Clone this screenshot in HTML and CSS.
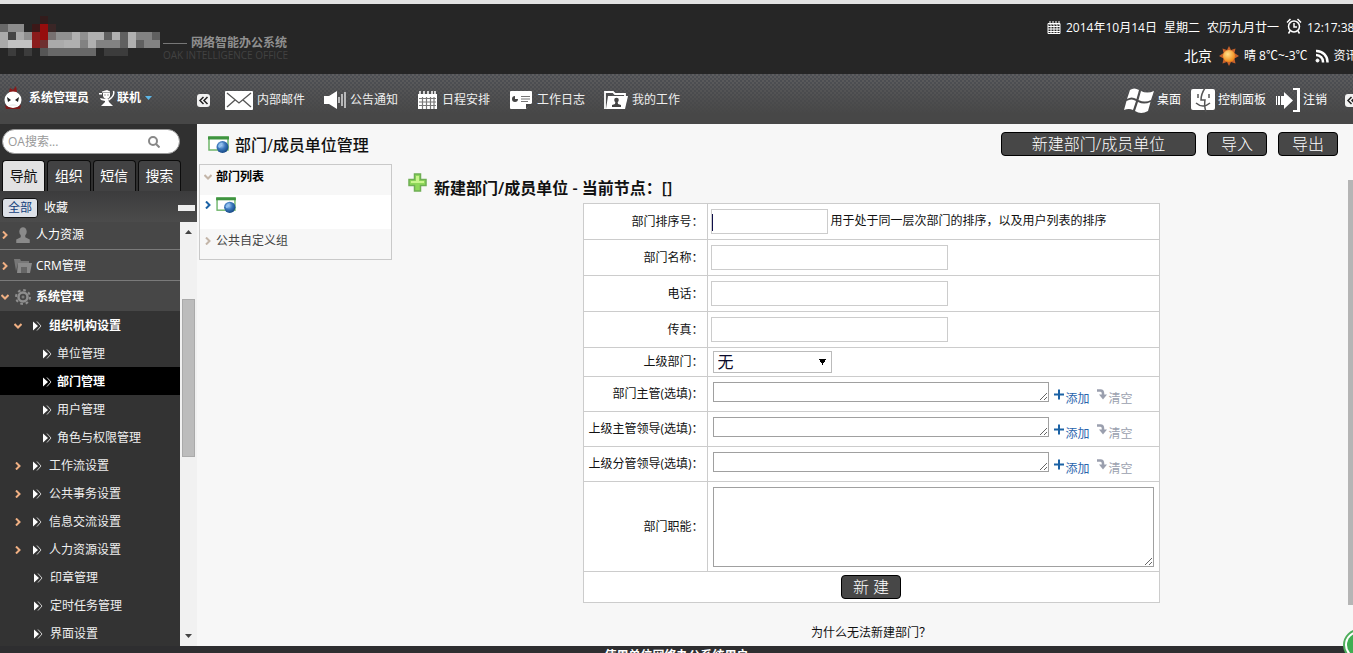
FILE: index.html
```html
<!DOCTYPE html>
<html lang="zh-CN">
<head>
<meta charset="utf-8">
<title>网络智能办公系统</title>
<link rel="stylesheet" href="styles.css">
</head>
<body>
<svg class="defs" aria-hidden="true">
  <defs>
    <radialGradient id="globe" cx="40%" cy="35%" r="65%"><stop offset="0" stop-color="#a8cdf5"/><stop offset=".5" stop-color="#3c78bd"/><stop offset="1" stop-color="#174a86"/></radialGradient>
    <radialGradient id="sunfill" cx="40%" cy="35%" r="65%"><stop offset="0" stop-color="#ffe08a"/><stop offset="1" stop-color="#f08a18"/></radialGradient>
    <symbol id="site" viewBox="0 0 21 17"><rect x="1" y="1" width="19" height="13" fill="#fff" stroke="#6fb56a" stroke-width="1.500"/><path d="M0 2h21" stroke="#3f9440" stroke-width="3"/><circle cx="14.500" cy="11" r="6" fill="url(#globe)"/><path d="M10 10q2-4 5-3l-2 2 0 2-2 1z" fill="#8fc0ee"/></symbol>
    <symbol id="chev" viewBox="0 0 8 8"><path d="M2 0.500L5.500 4 2 7.500" fill="none" stroke="currentColor" stroke-width="2"/></symbol>
    <symbol id="chevd" viewBox="0 0 8 8"><path d="M0.500 2L4 5.500 7.500 2" fill="none" stroke="currentColor" stroke-width="2"/></symbol>
    <symbol id="mark" viewBox="0 0 9 10"><path d="M0 0.500L5 5 0 9.500z" fill="#fff"/><path d="M4 0.500L8 5 4 9.500" fill="none" stroke="#ccc"/></symbol>
    <symbol id="plus" viewBox="0 0 10 10"><path d="M5 0v10M0 5h10" stroke="#1b62a5" stroke-width="2"/></symbol>
    <symbol id="clear" viewBox="0 0 10 11"><path d="M0 1.500h3.500q2.500 0 2.500 3V6" fill="none" stroke="#9a9fae" stroke-width="2.500"/><path d="M2 5.500h8L6 10.500z" fill="#9a9fae"/></symbol>
    <symbol id="back" viewBox="0 0 13 13"><rect width="13" height="13" rx="3" fill="#f2f2f2"/><path d="M6.500 3L3 6.500 6.500 10M10.500 3L7 6.500 10.500 10" fill="none" stroke="#222" stroke-width="1.500"/></symbol>
  </defs>
</svg>

<header class="banner">
  <div class="brand">
    <svg class="mosaic" viewBox="0 0 20 5" preserveAspectRatio="none" shape-rendering="crispEdges" aria-hidden="true">
      <path d="M0 1h1v1H0zM6 4h6v1H6z" fill="#686868"/>
      <path d="M1 1h2v1H1z" fill="#8c8c8c"/>
      <path d="M5 0h1v1H5z" fill="#321c1c"/>
      <path d="M4 1h1v1H4z" fill="#3c1818"/>
      <path d="M5 1h1v2H5z" fill="#960d0d"/>
      <path d="M5 3h1v1H5z" fill="#6e3030"/>
      <path d="M4 2h1v2H4z" fill="#8a1c1c"/>
      <path d="M5 4h1v1H5z" fill="#555"/>
      <path d="M6 1h1v1H6z" fill="#3a2626"/>
      <path d="M6 2h1v1H6z" fill="#777070"/>
      <path d="M0 2h1v2H0zM2 2h1v1H2zM6 3h2v1H6z" fill="#aaa"/>
      <path d="M1 2h1v1H1z" fill="#444"/>
      <path d="M3 2h1v1H3zM7 2h2v1H7zM10 2h1v1h-1z" fill="#909090"/>
      <path d="M1 3h3v1H1z" fill="#c2c2c2"/>
      <path d="M9 2h1v2H9zM11 2h2v1h-2zM11 3h1v1h-1zM8 3h1v1H8zM14 2h1v1h-1zM16 2h1v2h-1z" fill="#b0b0b0"/>
      <path d="M10 3h1v1h-1zM12 3h1v1h-1zM13 3h2v1h-2zM17 2h2v1h-2zM18 3h2v1h-2z" fill="#828282"/>
      <path d="M13 2h1v1h-1zM15 2h1v2h-1zM17 3h1v1h-1zM19 2h1v1h-1z" fill="#606060"/>
      <path d="M1 4h1v1H1zM3 4h1v1H3zM13 4h3v1h-3z" fill="#3c3c3c"/>
    </svg>
    <div class="brand-text">
      <div class="brand-name"><span class="rule"></span>网络智能办公系统</div>
      <div class="brand-sub">OAK INTELLIGENCE OFFICE</div>
    </div>
  </div>
  <div class="status">
    <div class="status-row">
      <svg width="14" height="14" viewBox="0 0 14 14"><path d="M1 2.500h12v10H1zM1 5.500h12M1 8h12M1 10.500h12M4 2v10.500M7 2v10.500M10 2v10.500M3 0v4M6 0v4M9 0v4M12 0v4" fill="none" stroke="#fff"/></svg>
      <span>2014年10月14日</span><span>星期二</span><span>农历九月廿一</span>
      <svg class="clock" width="16" height="16" viewBox="0 0 16 16" fill="none" stroke="#fff" stroke-width="1.500"><circle cx="8" cy="8.500" r="5.500"/><path d="M8 5v4h3M1 4.500L4.500 1M15 4.500L11.500 1M4 13l-1.500 2.500M12 13l1.500 2.500"/></svg>
      <span>12:17:38</span>
    </div>
    <div class="status-row weather">
      <span class="city">北京</span>
      <svg width="20" height="20" viewBox="0 0 20 20"><path d="M10 0l2 4 4.500-1.500L15.500 7l4.500 3-4.500 2.500 1 5-4.500-1.500-2 4-2-4-4.500 1.500 1-5L0 10l4.500-3-1-4.500L8 4z" fill="#c8622a"/><circle cx="10" cy="10" r="6" fill="url(#sunfill)"/></svg>
      <span>晴 8℃~-3℃</span>
      <svg width="14" height="14" viewBox="0 0 14 14" fill="none" stroke="#fff" stroke-width="2.500"><circle cx="2.500" cy="11.500" r="1.500" fill="#fff" stroke-width="1"/><path d="M1 6a7 7 0 0 1 7 7.500M1 2a11 11 0 0 1 11.500 11.500"/></svg>
      <span>资讯</span>
    </div>
  </div>
</header>

<nav class="toolbar">
  <div class="user">
    <svg width="20" height="24" viewBox="0 0 20 24"><path d="M6 6l1-4 3 2 3-4 1 6z" fill="#8c1a1a"/><circle cx="10" cy="14" r="8.500" fill="#fff"/><path d="M2 19q8 6 16 0l-1 4H3z" fill="#7d1919"/><path d="M4 11l4 3-3 2zM16 11l-4 3 3 2z" fill="#222"/><path d="M5 20q5-4 10 0z" fill="#eee"/></svg>
    <b>系统管理员</b>
    <svg width="16" height="16" viewBox="0 0 16 16" fill="#fff"><path d="M3 1.500L8 0l3 1.500v1H3z"/><path d="M4 3h7v3q-1 3-3.500 3T4 6z"/><path d="M0 3h3v1.500H0zM6 9h3l1 3 4 4H2l4-4zM1 8l5 1v2l-4-1z"/><path d="M14.500 1q1.500 5-5 9" fill="none" stroke="#fff" stroke-width="1.500"/><path d="M5.500 4.500h1v1h-1zM8.500 4.500h1v1h-1z" fill="#444"/></svg>
    <b class="online">联机</b>
    <svg width="7" height="4" viewBox="0 0 7 4"><path d="M0 0h7L3.500 4z" fill="#5db7e8"/></svg>
  </div>
  <button class="icon-btn" aria-label="收起"><svg width="13" height="13"><use href="#back"/></svg></button>
  <div class="menu">
    <a href="#"><svg width="28" height="19" viewBox="0 0 28 19"><rect width="28" height="19" rx="1" fill="#fff"/><path d="M2 2l12 10L26 2M2 16l8-7M26 16l-8-7" fill="none" stroke="#555" stroke-width="1.300"/></svg>内部邮件</a>
    <a href="#"><svg width="22" height="18" viewBox="0 0 22 18"><path d="M0 5h5l8-5v18l-8-5H0z" fill="#fff"/><path d="M15 6v6M18 3v12M21 1v16" stroke="#fff" stroke-width="1.200"/></svg>公告通知</a>
    <a href="#"><svg width="21" height="19" viewBox="0 0 21 19"><path d="M1 3h19v15H1z" fill="#fff"/><path d="M3 0v5M7 0v5M11 0v5M15 0v5M18 0v5" stroke="#fff" stroke-width="1.500"/><path d="M2 7.500h17M2 11h17M2 14.500h17M5.500 6v12M9.500 6v12M13.500 6v12M17 6v12" stroke="#777" stroke-width="1.200"/></svg>日程安排</a>
    <a href="#"><svg width="24" height="18" viewBox="0 0 24 18"><path d="M2 0h20q1 0 1 1v11l-6 6H2q-1 0-1-1V1q0-1 1-1z" fill="#fff"/><path d="M6 5v3h3a3 3 0 1 1-3-3z" fill="#444"/><path d="M12 5.500h9M12 8h9M12 10.500h7" stroke="#777"/><path d="M17 18v-5h6z" fill="#444"/></svg>工作日志</a>
    <a href="#"><svg width="24" height="18" viewBox="0 0 24 18"><path d="M1 18V1h8l2 2h10v3" fill="none" stroke="#fff" stroke-width="1.800"/><path d="M4 5h20l-3 13H2z" fill="#fff"/><circle cx="12.500" cy="9" r="2.300" fill="#444"/><path d="M11.500 10h2l.5 3 3 1v2H8v-2l3-1z" fill="#444"/></svg>我的工作</a>
  </div>
  <div class="system">
    <a href="#"><svg width="30" height="25" viewBox="0 0 30 25" fill="#fff"><path d="M6 2q4-3 9 0l-2.500 9q-5-3-9.500 0zM17 3q6 3 13 0l-3 9q-6 3-12.500 0zM2.500 13q5-3 9.500 0l-3 9q-4-2-9 0zM14 14q6 3 12.500 0l-2.500 9q-7 4-13 0z"/></svg>桌面</a>
    <a href="#"><svg width="24" height="24" viewBox="0 0 24 24"><rect y="1" width="24" height="21" rx="2" fill="#fff"/><path d="M14 0q-4 6-4 12h4q-1 6 1 12M5 15q7 6 14 0M7 6v4M18 6v4" fill="none" stroke="#555" stroke-width="1.500"/></svg>控制面板</a>
    <a href="#"><svg width="24" height="24" viewBox="0 0 24 24" fill="#fff"><path d="M0 8h1v9H0zM2 8h2v9H2zM5 8h3V4l9 8.500L8 21v-4H5zM17 0h7v24h-7v-2h4V2h-4z"/></svg>注销</a>
    <button class="icon-btn" aria-label="展开"><svg width="13" height="13"><use href="#back"/></svg></button>
  </div>
</nav>

<div class="shell">
  <aside class="sidebar">
    <form class="search">
      <input type="text" placeholder="OA搜索..." aria-label="OA搜索">
      <button type="button" aria-label="搜索"><svg width="12" height="12" viewBox="0 0 12 12" fill="none" stroke="#888" stroke-width="2"><circle cx="5" cy="5" r="4"/><path d="M8 8l3.500 3.500"/></svg></button>
    </form>
    <div class="tabs">
      <button class="on">导航</button><button>组织</button><button>短信</button><button>搜索</button>
    </div>
    <div class="filter">
      <button class="all">全部</button><button>收藏</button><span class="dash"></span>
    </div>
    <div class="nav-body">
      <ul class="nav-list">
        <li class="top first"><svg class="arrow"><use href="#chev"/></svg><svg class="ico" viewBox="0 0 16 14" fill="#8a8a8a"><ellipse cx="8" cy="4" rx="3.300" ry="4"/><path d="M6 7h4v2l4 2v3H2v-3l4-2z"/></svg>人力资源</li>
        <li class="top"><svg class="arrow"><use href="#chev"/></svg><svg class="ico" viewBox="0 0 18 14"><path d="M0 0h6l1 2h8v2H4l-2 8z" fill="#777"/><path d="M4 4h14l-2 10H3z" fill="#8a8a8a"/><path d="M7 8h6v6H7z" fill="#666"/></svg>CRM管理</li>
        <li class="top open"><svg class="arrow"><use href="#chevd"/></svg><svg class="ico" viewBox="0 0 16 16" fill="none" stroke="#8e8e8e"><circle cx="8" cy="8" r="4.500" stroke-width="2.500"/><circle cx="8" cy="8" r="7" stroke-width="2" stroke-dasharray="2.700 2.800"/><circle cx="8" cy="8" r="1"/></svg>系统管理</li>
        <li class="sub bold"><svg class="arrow"><use href="#chevd"/></svg><svg class="mark"><use href="#mark"/></svg>组织机构设置</li>
        <li class="deep"><svg class="mark"><use href="#mark"/></svg>单位管理</li>
        <li class="deep current"><svg class="mark"><use href="#mark"/></svg>部门管理</li>
        <li class="deep"><svg class="mark"><use href="#mark"/></svg>用户管理</li>
        <li class="deep"><svg class="mark"><use href="#mark"/></svg>角色与权限管理</li>
        <li class="sub"><svg class="arrow"><use href="#chev"/></svg><svg class="mark"><use href="#mark"/></svg>工作流设置</li>
        <li class="sub"><svg class="arrow"><use href="#chev"/></svg><svg class="mark"><use href="#mark"/></svg>公共事务设置</li>
        <li class="sub"><svg class="arrow"><use href="#chev"/></svg><svg class="mark"><use href="#mark"/></svg>信息交流设置</li>
        <li class="sub"><svg class="arrow"><use href="#chev"/></svg><svg class="mark"><use href="#mark"/></svg>人力资源设置</li>
        <li class="leaf"><svg class="mark"><use href="#mark"/></svg>印章管理</li>
        <li class="leaf"><svg class="mark"><use href="#mark"/></svg>定时任务管理</li>
        <li class="leaf"><svg class="mark"><use href="#mark"/></svg>界面设置</li>
      </ul>
      <div class="scroll" aria-hidden="true">
        <svg width="7" height="4" viewBox="0 0 7 4"><path d="M0 4h7L3.500 0z" fill="#444"/></svg>
        <div class="track"><div class="thumb"></div></div>
        <svg width="7" height="4" viewBox="0 0 7 4"><path d="M0 0h7L3.500 4z" fill="#444"/></svg>
      </div>
    </div>
  </aside>

  <main class="content">
    <div class="page-head">
      <svg width="21" height="17"><use href="#site"/></svg>
      <h1>部门/成员单位管理</h1>
      <button class="dark wide">新建部门/成员单位</button>
      <button class="dark">导入</button>
      <button class="dark">导出</button>
    </div>
    <div class="columns">
      <div class="tree">
        <div class="tree-head"><svg class="grey"><use href="#chevd"/></svg><b>部门列表</b></div>
        <div class="tree-node"><svg class="blue"><use href="#chev"/></svg><svg class="node-ico"><use href="#site"/></svg></div>
        <div class="tree-foot"><svg class="grey"><use href="#chev"/></svg>公共自定义组</div>
      </div>
      <div class="form-pane">
        <h2><svg width="19" height="19" viewBox="0 0 19 19"><path d="M6.500 1h6v5.500H18v6h-5.500V18h-6v-5.500H1v-6h5.500z" fill="#8ed85a" stroke="#6fae54" stroke-width="1.500"/><path d="M8 3h3v5h5v2H3V8h5z" fill="#c9f58e"/></svg><span>新建部门/成员单位 - 当前节点：[]</span></h2>
        <form>
          <table>
            <tr><th><label for="f1">部门排序号：</label></th><td><input id="f1" class="short" type="text"> 用于处于同一层次部门的排序，以及用户列表的排序</td></tr>
            <tr><th><label for="f2">部门名称：</label></th><td><input id="f2" type="text"></td></tr>
            <tr><th><label for="f3">电话：</label></th><td><input id="f3" type="text"></td></tr>
            <tr><th><label for="f4">传真：</label></th><td><input id="f4" type="text"></td></tr>
            <tr class="select-row"><th><label for="f5">上级部门：</label></th><td><select id="f5"><option>无</option></select></td></tr>
            <tr class="pick-row"><th><label for="f6">部门主管(选填)：</label></th><td><div class="pick"><textarea id="f6"></textarea><a class="add" href="#"><svg><use href="#plus"/></svg><span>添加</span></a><a class="clear" href="#"><svg><use href="#clear"/></svg><span>清空</span></a></div></td></tr>
            <tr class="pick-row"><th><label for="f7">上级主管领导(选填)：</label></th><td><div class="pick"><textarea id="f7"></textarea><a class="add" href="#"><svg><use href="#plus"/></svg><span>添加</span></a><a class="clear" href="#"><svg><use href="#clear"/></svg><span>清空</span></a></div></td></tr>
            <tr class="pick-row"><th><label for="f8">上级分管领导(选填)：</label></th><td><div class="pick"><textarea id="f8"></textarea><a class="add" href="#"><svg><use href="#plus"/></svg><span>添加</span></a><a class="clear" href="#"><svg><use href="#clear"/></svg><span>清空</span></a></div></td></tr>
            <tr class="duty-row"><th><label for="f9">部门职能：</label></th><td><textarea id="f9" class="duty"></textarea></td></tr>
            <tr class="submit-row"><td colspan="2"><button type="button" class="dark">新 建</button></td></tr>
          </table>
        </form>
        <a class="help" href="#">为什么无法新建部门？</a>
      </div>
      <div class="page-thumb"></div>
    </div>
  </main>
</div>
<footer class="foot"><span>使用单位网络办公系统用户</span></footer>
<div class="bubble"><svg width="32" height="32" viewBox="0 0 32 32"><circle cx="16" cy="16" r="15" fill="#fff" stroke="#4fae5c" stroke-width="2"/><circle cx="16" cy="16" r="12" fill="#3fae52"/></svg></div>
</body>
</html>
```
FILE: styles.css
```css
* { box-sizing: border-box; }
body {
  margin: 0;
  height: 100vh;
  display: flex;
  flex-direction: column;
  overflow: hidden;
  border-top: 4px solid #e2e2e2;
  background: #2e2e30;
  font: 12px/16px "Open Sans", "Noto Sans CJK SC", sans-serif;
  color: #111;
  position: relative;
}
button, input, select, textarea { font: inherit; margin: 0; }
a { text-decoration: none; color: inherit; }
svg { flex: none; display: block; }
.defs { position: absolute; width: 0; height: 0; }

.banner { flex: none; height: 70px; display: flex; justify-content: space-between; background: #262626; overflow: hidden; }
.brand { display: flex; padding-top: 12px; gap: 3px; }
.mosaic { width: 160px; height: 40px; }
.brand-text { padding-top: 20px; white-space: nowrap; }
.brand-name { display: flex; align-items: center; gap: 4px; color: #8f8f8f; font-size: 12px; line-height: 14px; font-weight: 700; }
.rule { width: 24px; height: 1px; background: #777; }
.brand-sub { color: #424242; font-size: 10px; line-height: 10px; }
.status { width: 306px; color: #fff; white-space: nowrap; padding-top: 14px; }
.status-row { display: flex; align-items: center; gap: 5px; height: 20px; }
.status-row span { margin-right: 2px; }
.status-row .clock { margin-bottom: 4px; }
.status-row.weather { padding-left: 137px; margin-top: 8px; }
.status-row .city { font-size: 14px; }

.toolbar {
  flex: none; height: 50px; display: flex; align-items: center; padding-top: 2px; color: #eee; white-space: nowrap; overflow: hidden;
  background:
    linear-gradient(transparent, #474747 80%),
    repeating-conic-gradient(#4d4f54 0 25%, #5e5e60 0 50%) 0 0 / 4px 4px;
}
.user { width: 197px; display: flex; align-items: center; padding: 0 0 4px 3px; color: #fff; }
.user b { margin: 0 10px 0 6px; }
.user b.online { margin: 0 4px 0 2px; }
.icon-btn { flex: none; padding: 0; border: 0; background: none; }
.menu { display: flex; flex: 1; padding-left: 15px; }
.menu a { display: flex; align-items: center; gap: 4px; margin-right: 19px; }
.system { width: 229px; display: flex; align-items: center; color: #fff; }
.system a { display: flex; align-items: center; gap: 3px; margin-right: 10px; }
.system .icon-btn { margin-left: 8px; }

.shell { flex: 1; min-height: 0; display: flex; }
.sidebar { flex: none; width: 197px; display: flex; flex-direction: column; background: #303030; color: #eee; }
.search { display: flex; align-items: center; height: 25px; margin: 5px 17px 6px 2px; border: 1px solid #999; border-radius: 13px; background: #fff; }
.search input { flex: 1; min-width: 0; border: 0; background: none; padding: 0 5px; outline: 0; }
.search input::placeholder { color: #999; }
.search button { border: 0; background: none; padding: 0 19px 0 0; }
.tabs { display: flex; gap: 2px; padding: 0 16px 0 2px; }
.tabs button { flex: 1; height: 31px; padding: 0; border: 1px solid #0c0c0c; border-bottom: 0; border-radius: 4px 4px 0 0; background: #424243; color: #fff; font-size: 14px; }
.tabs button.on { background: #e2e2e2; color: #111; }
.filter { display: flex; align-items: center; height: 31px; padding: 2px 0 0 2px; background: linear-gradient(#3c3c3d, #4b4b4b); }
.filter button { border: 0; background: none; color: #fff; padding: 0 6px; height: 20px; }
.filter .all { border: 1px solid #111; border-radius: 3px; background: #dde1e8; color: #123f7c; padding: 0 5px; }
.dash { width: 17px; height: 6px; background: #eee; margin-left: auto; margin-right: 2px; }
.nav-body { flex: 1; min-height: 0; display: flex; }
.nav-list { flex: 1; margin: 0; padding: 0; list-style: none; overflow: hidden; background: #333; }
.nav-list li { display: flex; align-items: center; height: 28px; padding-top: 2px; }
.nav-list .top { height: 31px; background: #474747; border-bottom: 1px solid #7a7a7a; color: #fff; padding-left: 1px; }
.nav-list .top.first { height: 28px; padding-top: 0; padding-bottom: 2px; }
.nav-list .top.open { height: 30px; border-bottom: 0; font-weight: 700; }
.arrow { width: 8px; height: 8px; color: #f0b083; }
.ico { width: 18px; height: 16px; margin: 0 4px 0 5px; }
.mark { width: 9px; height: 10px; margin-right: 5px; }
.sub { padding-left: 14px; }
.sub .arrow { margin-right: 11px; }
.sub .mark { margin-right: 7px; }
.bold, .current { font-weight: 700; color: #fff; }
.deep { padding-left: 43px; }
.current { background: #000; }
.leaf { padding-left: 34px; }
.leaf .mark { margin-right: 7px; }
.scroll { width: 17px; display: flex; flex-direction: column; align-items: center; background: #f1f1f1; padding: 8px 0; }
.track { flex: 1; width: 13px; padding-top: 65px; }
.thumb { height: 158px; background: #bcbcbc; border: 1px solid #aaa; }

.content { flex: 1; min-width: 0; background: #f7f7f7; display: flex; flex-direction: column; }
.page-head { display: flex; align-items: center; gap: 11px; height: 40px; padding: 0 15px 0 11px; }
h1, h2 { margin: 0; font-size: 16px; line-height: 24px; font-weight: 500; }
h1 { flex: 1; margin-left: -5px; padding-top: 2px; }
.dark { height: 24px; width: 60px; padding: 0; border: 1px solid #000; border-radius: 4px; background: #474747; color: #fff; font-size: 16px; line-height: 20px; font-weight: 300; }
.dark.wide { width: 195px; }
.columns { flex: 1; display: flex; align-items: flex-start; }
.tree { flex: none; width: 193px; margin-left: 2px; border: 1px solid #c9c9c9; color: #333; }
.tree > div { display: flex; align-items: center; gap: 4px; padding-left: 4px; }
.tree svg { width: 8px; height: 8px; }
.tree .node-ico { width: 20px; height: 16px; }
.tree-head { height: 30px; padding-bottom: 6px; color: #000; }
.tree-node { height: 34px; background: #fff; padding-bottom: 14px; }
.tree-foot { height: 30px; padding-bottom: 6px; color: #444; }
.grey { color: #c3b5a8; }
.blue { color: #1b62a5; }
.form-pane { flex: 1; min-width: 0; display: flex; flex-direction: column; align-items: center; padding: 9px 0 0 6px; }
h2, th, .help { font-family: "Open Sans", "Noto Sans CJK TC", "Noto Sans CJK SC", sans-serif; }
h2 { align-self: stretch; display: flex; gap: 7px; padding-left: 10px; height: 30px; font-weight: 600; }
h2 span { padding-top: 3px; }
table { width: 577px; border-collapse: collapse; background: #fff; }
tr { height: 36px; }
th, td { border: 1px solid #ccc; padding: 0 3px; }
th { width: 124px; text-align: right; font-weight: 400; white-space: nowrap; }
td input { width: 237px; height: 25px; border: 1px solid #ccc; vertical-align: middle; }
td .short { width: 117px; background: linear-gradient(#10104a, #10104a) 0 4px / 1px 17px no-repeat #fff; }
.select-row { height: 29px; }
.select-row select, .pick-row textarea, .duty { margin-left: 2px; }
select {
  display: block; width: 119px; height: 22px; padding: 0 4px; border: 1px solid #bbb; border-radius: 0; font-size: 16px; line-height: 18px; color: #0a0a2a; appearance: none;
  background: conic-gradient(from 330deg at 50% 100%, #000 60deg, transparent 0) 105px 7px / 7px 6px no-repeat #fff;
}
.pick-row { height: 35px; }
.pick { display: flex; align-items: center; }
textarea { display: block; border: 1px solid #a0a0a0; padding: 0; background: #fff; }
.pick textarea { width: 336px; height: 20px; margin-bottom: 5px; }
.pick a { display: flex; gap: 2px; padding-top: 7px; }
.pick a svg { width: 10px; height: 11px; }
.pick a span { padding-top: 2px; }
.pick .add { color: #2a64ad; margin: 0 7px 0 5px; }
.pick .clear { color: #9a9fae; }
.duty-row { height: 90px; }
.duty { width: 441px; height: 80px; }
.submit-row { height: 31px; }
.submit-row td { text-align: center; }
.help { margin-top: 22px; }
.page-thumb { width: 5px; height: 425px; margin: 16px 0 0 4px; background: #b5b5b5; }
.foot { flex: none; height: 7px; overflow: hidden; background: #2e2e30; color: #fff; font-weight: 700; padding: 3px 0 0; text-align: center; line-height: 14px; }
.bubble { position: absolute; right: -22px; bottom: -8px; }
```
